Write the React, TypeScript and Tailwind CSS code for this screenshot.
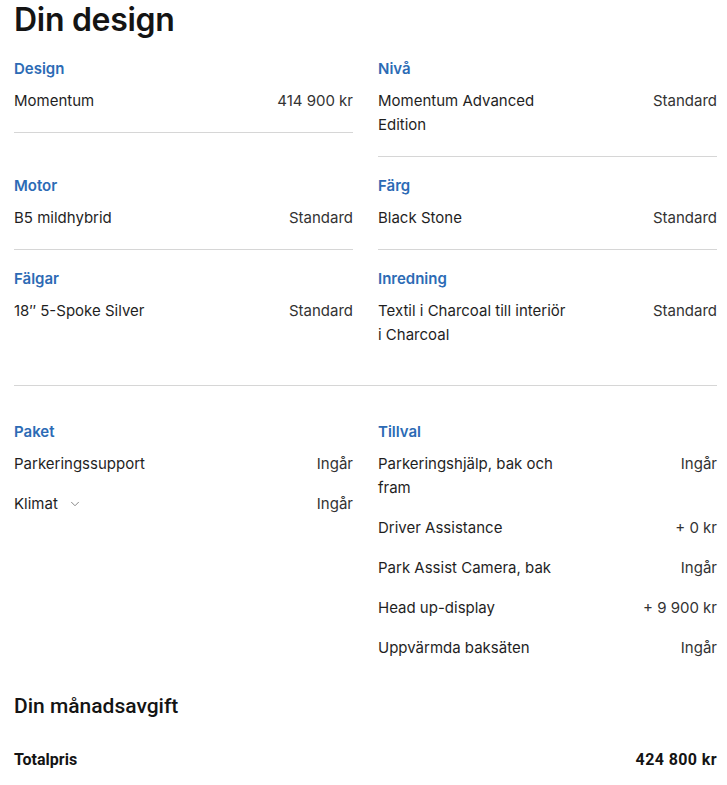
import { ChevronDown } from "lucide-react";

type Row = { name: string; value: string; chevron?: boolean };
type Section = { title: string; rows: Row[] };

const Item = ({ row }: { row: Row }) => (
  <div className="flex items-start justify-between gap-4 text-[15px] leading-6 text-[#1f1f1f]">
    <span className="flex items-center gap-2.5 max-w-[191px]">
      {row.name}
      {row.chevron && <ChevronDown className="w-3.5 h-3.5 text-[#777]" strokeWidth={1.5} />}
    </span>
    <span className="whitespace-nowrap text-[#333]">{row.value}</span>
  </div>
);

const Block = ({ section, divider = true }: { section: Section; divider?: boolean }) => (
  <div className={divider ? "border-b border-[#d6d6d6] pb-[19px]" : ""}>
    <h3 className="text-[15px] leading-6 font-semibold text-[#2c6bb5]">{section.title}</h3>
    <div className="mt-2 flex flex-col gap-4">
      {section.rows.map((r) => (
        <Item key={r.name} row={r} />
      ))}
    </div>
  </div>
);

const top: Section[] = [
  { title: "Design", rows: [{ name: "Momentum", value: "414 900 kr" }] },
  { title: "Nivå", rows: [{ name: "Momentum Advanced Edition", value: "Standard" }] },
  { title: "Motor", rows: [{ name: "B5 mildhybrid", value: "Standard" }] },
  { title: "Färg", rows: [{ name: "Black Stone", value: "Standard" }] },
];

const wheels: Section[] = [
  { title: "Fälgar", rows: [{ name: "18\u2033 5-Spoke Silver", value: "Standard" }] },
  { title: "Inredning", rows: [{ name: "Textil i Charcoal till interiör i Charcoal", value: "Standard" }] },
];

const paket: Section = {
  title: "Paket",
  rows: [
    { name: "Parkeringssupport", value: "Ingår" },
    { name: "Klimat", value: "Ingår", chevron: true },
  ],
};

const tillval: Section = {
  title: "Tillval",
  rows: [
    { name: "Parkeringshjälp, bak och fram", value: "Ingår" },
    { name: "Driver Assistance", value: "+ 0 kr" },
    { name: "Park Assist Camera, bak", value: "Ingår" },
    { name: "Head up-display", value: "+ 9 900 kr" },
    { name: "Uppvärmda baksäten", value: "Ingår" },
  ],
};

export default function App() {
  return (
    <div className="bg-white min-h-screen pl-[14px] pr-[10px] font-['Inter',sans-serif] overflow-hidden">
      <h1 className="text-[32px] leading-10 font-semibold text-[#141414] tracking-[-0.3px]">Din design</h1>

      <div className="mt-[17px] grid grid-cols-2 gap-x-[25px] gap-y-[17px] items-start">
        {top.map((s) => (
          <Block key={s.title} section={s} />
        ))}
        {wheels.map((s) => (
          <Block key={s.title} section={s} divider={false} />
        ))}
      </div>

      <div className="mt-[38px] border-t border-[#d6d6d6]" />

      <div className="mt-[34px] grid grid-cols-2 gap-x-[25px] items-start">
        <Block section={paket} divider={false} />
        <Block section={tillval} divider={false} />
      </div>

      <div className="font-['Roboto',sans-serif]">
        <h2 className="mt-[32px] text-[21px] leading-7 font-medium text-[#141414]">Din månadsavgift</h2>
        <div className="mt-[28px] flex justify-between text-[16px] leading-6 font-bold text-[#141414]">
          <span>Totalpris</span>
          <span className="tracking-[0.4px]">424 800 kr</span>
        </div>
      </div>
    </div>
  );
}
